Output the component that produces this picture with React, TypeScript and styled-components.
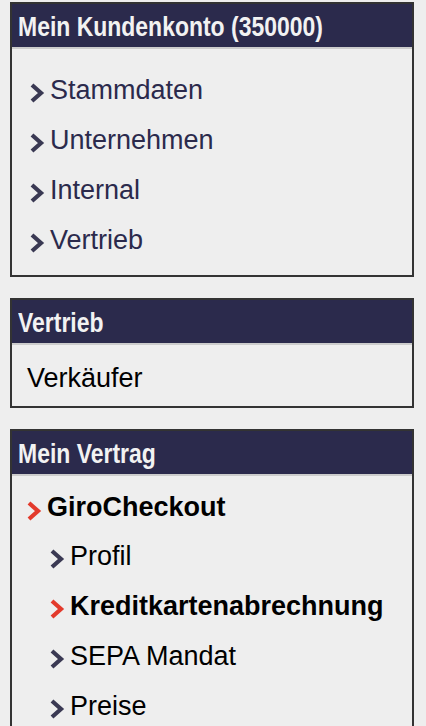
import styled, { createGlobalStyle } from 'styled-components';

const GlobalStyle = createGlobalStyle`
  html, body {
    margin: 0;
    padding: 0;
    background: #eeeeee;
  }
  body {
    font-family: "Liberation Sans", Arial, sans-serif;
  }
`;

const Page = styled.div`
  display: flex;
  flex-direction: column;
  gap: 21px;
  padding: 2px 12px 0 10px;
`;

const Box = styled.section`
  border: 2px solid #333333;
  background: #eeeeee;
`;

const Header = styled.h2`
  margin: 0;
  height: 45px;
  padding: 2px 6px 0;
  box-sizing: border-box;
  display: flex;
  align-items: center;
  background: #2b2a4c;
  border-bottom: 2px solid #cccccc;
  color: #f2f2f2;
  font-family: "Liberation Sans", Arial, sans-serif;
  font-weight: 700;
  font-size: 28px;
  white-space: nowrap;
  overflow: hidden;
`;

/* the original heading face is a condensed grotesque */
const HeaderText = styled.span`
  display: inline-block;
  transform: scaleX(0.82);
  transform-origin: left center;
`;

const Body = styled.div<{ $top: number; $bottom: number }>`
  padding: ${({ $top, $bottom }) => `${$top}px 0 ${$bottom}px`};
`;

const Item = styled.a<{ $indent: number; $bold?: boolean; $dark?: boolean; $height?: number }>`
  display: flex;
  align-items: center;
  gap: 5px;
  height: ${({ $height }) => $height ?? 50}px;
  padding-left: ${({ $indent }) => $indent}px;
  font-size: 27px;
  font-weight: ${({ $bold }) => ($bold ? 700 : 400)};
  color: ${({ $dark }) => ($dark ? '#000000' : '#2b2a4c')};
  text-decoration: none;
`;

const Plain = styled.div`
  height: 50px;
  display: flex;
  align-items: center;
  padding-left: 15px;
  font-size: 27px;
  color: #000000;
`;

const ChevronIcon = styled.svg`
  flex: none;
  width: 16px;
  height: 22px;
  margin-top: 6px;
`;

function Chevron({ red }: { red?: boolean }) {
  return (
    <ChevronIcon viewBox="0 0 16 22">
      <path
        d="M3 3 L12 11 L3 19"
        fill="none"
        stroke={red ? '#e33a2c' : '#3a3953'}
        strokeWidth={4.2}
        strokeLinejoin="miter"
      />
    </ChevronIcon>
  );
}

export default function App() {
  return (
    <>
      <GlobalStyle />
      <Page>
        <Box>
          <Header>
            <HeaderText>Mein Kundenkonto (350000)</HeaderText>
          </Header>
          <Body $top={16} $bottom={10}>
            {['Stammdaten', 'Unternehmen', 'Internal', 'Vertrieb'].map((label) => (
              <Item key={label} href="#" $indent={17}>
                <Chevron />
                {label}
              </Item>
            ))}
          </Body>
        </Box>
        <Box>
          <Header>
            <HeaderText>Vertrieb</HeaderText>
          </Header>
          <Body $top={8} $bottom={3}>
            <Plain>Verkäufer</Plain>
          </Body>
        </Box>
        <Box>
          <Header>
            <HeaderText>Mein Vertrag</HeaderText>
          </Header>
          <Body $top={8} $bottom={10}>
            <Item href="#" $indent={14} $bold $dark $height={47}>
              <Chevron red />
              GiroCheckout
            </Item>
            <Item href="#" $indent={37} $dark>
              <Chevron />
              Profil
            </Item>
            <Item href="#" $indent={37} $bold $dark>
              <Chevron red />
              Kreditkartenabrechnung
            </Item>
            <Item href="#" $indent={37} $dark>
              <Chevron />
              SEPA Mandat
            </Item>
            <Item href="#" $indent={37} $dark>
              <Chevron />
              Preise
            </Item>
          </Body>
        </Box>
      </Page>
    </>
  );
}
